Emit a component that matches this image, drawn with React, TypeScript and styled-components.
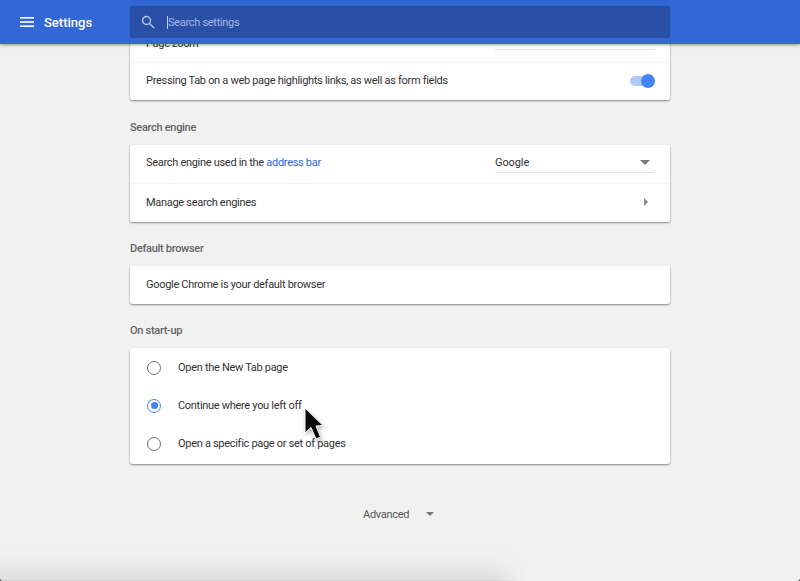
import React from 'react';
import styled, { createGlobalStyle } from 'styled-components';

const GlobalStyle = createGlobalStyle`
  html, body {
    margin: 0;
    height: 100%;
    background: #333;
    font-family: Roboto, "Liberation Sans", sans-serif;
    overflow: hidden;
  }
`;

const Page = styled.div`
  position: relative;
  width: 800px;
  height: 581px;
  overflow: hidden;
  border-radius: 0 0 3px 3px;
  background: #f1f1f1;
`;

const Header = styled.header`
  position: relative;
  z-index: 2;
  height: 44px;
  background: #3367d6;
  box-shadow: 0 1px 3px rgba(0, 0, 0, 0.4);
  display: flex;
  align-items: center;
`;

const TitleBlock = styled.div`
  width: 130px;
  display: flex;
  align-items: center;
  gap: 10px;
  padding-left: 20px;
  box-sizing: border-box;
  color: #fff;
`;

const Title = styled.span`
  font-size: 13px;
  font-weight: 500;
`;

const SearchBox = styled.div`
  width: 540px;
  height: 32px;
  border-radius: 2px;
  background: #2a50a6;
  display: flex;
  align-items: center;
  padding-left: 11px;
  box-sizing: border-box;
`;

const Caret = styled.span`
  width: 1px;
  height: 13px;
  margin-left: 12px;
  background: #c4d3f2;
`;

const Placeholder = styled.span`
  font-size: 11px;
  letter-spacing: -0.3px;
  color: #a3b8e6;
`;

const Main = styled.main`
  width: 540px;
  margin: -15px auto 0;
  display: flex;
  flex-direction: column;
`;

const Card = styled.section<{ $padded?: boolean }>`
  background: #fff;
  border-radius: 2px;
  box-shadow: 0 1px 2px rgba(0, 0, 0, 0.45);
  padding: ${(p) => (p.$padded ? '1px 0' : '0')};
`;

const Row = styled.div<{ $divided?: boolean; $h?: number; $pb?: number }>`
  height: ${(p) => p.$h ?? 38}px;
  padding: 0 16px ${(p) => p.$pb ?? 2}px;
  box-sizing: border-box;
  display: flex;
  align-items: center;
  justify-content: space-between;
  font-size: 11px;
  letter-spacing: -0.3px;
  color: #333;
  border-top: ${(p) => (p.$divided ? '1px solid #f3f3f3' : 'none')};
`;

const ClippedLabel = styled.span`
  margin-top: -2px;
`;

const SectionTitle = styled.h2<{ $top?: number }>`
  margin: ${(p) => p.$top ?? 19}px 0 9px;
  height: 16px;
  line-height: 16px;
  font-size: 11px;
  font-weight: 500;
  letter-spacing: -0.3px;
  color: #646464;
`;

const Link = styled.span`
  color: #3367d6;
`;

const ToggleTrack = styled.div`
  position: relative;
  width: 24px;
  height: 10px;
  border-radius: 5px;
  background: #b3c9f5;
`;

const ToggleKnob = styled.div`
  position: absolute;
  right: -1px;
  top: -2px;
  width: 14px;
  height: 14px;
  border-radius: 50%;
  background: #4285f4;
`;

const Select = styled.div`
  width: 159px;
  height: 21px;
  padding-top: 3px;
  box-sizing: border-box;
  border-bottom: 1px solid #e2e2e2;
  display: flex;
  align-items: flex-start;
  justify-content: space-between;
  line-height: 16px;
  letter-spacing: -0.1px;
`;

const ZoomSelect = styled.div`
  width: 159px;
  height: 11px;
  box-sizing: border-box;
  border-bottom: 1px solid #e2e2e2;
`;

const ArrowDown = styled.span<{ $w: number }>`
  width: 0;
  height: 0;
  border-left: ${(p) => p.$w}px solid transparent;
  border-right: ${(p) => p.$w}px solid transparent;
  border-top: ${(p) => p.$w}px solid #777;
`;

const SelectArrow = styled(ArrowDown)`
  margin: 5px 4px 0 0;
`;

const ArrowRight = styled.span`
  width: 0;
  height: 0;
  margin-right: 6px;
  border-top: 4px solid transparent;
  border-bottom: 4px solid transparent;
  border-left: 4px solid #888;
`;

const RadioRow = styled.div`
  height: 38px;
  padding: 0 0 1px 17px;
  box-sizing: border-box;
  display: flex;
  align-items: center;
  gap: 17px;
  font-size: 11px;
  letter-spacing: -0.3px;
  color: #333;
`;

const Radio = styled.span<{ $checked?: boolean }>`
  width: 14px;
  height: 14px;
  box-sizing: border-box;
  border-radius: 50%;
  border: 1.5px solid ${(p) => (p.$checked ? '#4285f4' : '#6e6e6e')};
  display: flex;
  align-items: center;
  justify-content: center;
  &::after {
    content: '';
    display: ${(p) => (p.$checked ? 'block' : 'none')};
    width: 7px;
    height: 7px;
    border-radius: 50%;
    background: #4285f4;
  }
`;

const Advanced = styled.div`
  margin: 41px 0 0 233px;
  display: flex;
  align-items: center;
  gap: 17px;
  height: 18px;
  font-size: 11px;
  letter-spacing: -0.3px;
  color: #555;
`;

const Cursor = styled.svg`
  position: absolute;
  z-index: 3;
  left: 304px;
  top: 407px;
  filter: drop-shadow(1px 2px 2px rgba(0, 0, 0, 0.3));
`;

const BottomShade = styled.div`
  position: absolute;
  left: 0;
  bottom: 0;
  width: 525px;
  height: 34px;
  background: linear-gradient(
    to bottom,
    rgba(0, 0, 0, 0),
    rgba(0, 0, 0, 0.02) 50%,
    rgba(0, 0, 0, 0.07) 97%,
    rgba(0, 0, 0, 0.18)
  );
  mask-image: linear-gradient(to right, #000 94%, transparent);
`;

const App = () => {
  return (
    <Page>
      <GlobalStyle />
      <Header>
        <TitleBlock>
          <svg width="14" height="12" viewBox="0 0 14 12" fill="#fff">
            <rect x="0" y="1" width="14" height="1.6" />
            <rect x="0" y="5.2" width="14" height="1.6" />
            <rect x="0" y="9.4" width="14" height="1.6" />
          </svg>
          <Title>Settings</Title>
        </TitleBlock>
        <SearchBox>
          <svg width="14" height="14" viewBox="0 0 14 14" fill="none" stroke="#b5c6ec" strokeWidth="1.4">
            <circle cx="5.5" cy="5.5" r="4" />
            <path d="M8.5 8.5 L13 13" />
          </svg>
          <Caret />
          <Placeholder>Search settings</Placeholder>
        </SearchBox>
      </Header>
      <Main>
        <Card>
          <Row $h={33}>
            <ClippedLabel>Page zoom</ClippedLabel>
            <ZoomSelect />
          </Row>
          <Row $divided>
            <span>Pressing Tab on a web page highlights links, as well as form fields</span>
            <ToggleTrack>
              <ToggleKnob />
            </ToggleTrack>
          </Row>
        </Card>
        <SectionTitle $top={20}>Search engine</SectionTitle>
        <Card>
          <Row $pb={4}>
            <span>
              Search engine used in the <Link>address bar</Link>
            </span>
            <Select>
              <span>Google</span>
              <SelectArrow $w={5} />
            </Select>
          </Row>
          <Row $divided $h={39}>
            <span>Manage search engines</span>
            <ArrowRight />
          </Row>
        </Card>
        <SectionTitle>Default browser</SectionTitle>
        <Card>
          <Row>
            <span>Google Chrome is your default browser</span>
          </Row>
        </Card>
        <SectionTitle>On start-up</SectionTitle>
        <Card $padded>
          <RadioRow>
            <Radio />
            <span>Open the New Tab page</span>
          </RadioRow>
          <RadioRow>
            <Radio $checked />
            <span>Continue where you left off</span>
          </RadioRow>
          <RadioRow>
            <Radio />
            <span>Open a specific page or set of pages</span>
          </RadioRow>
        </Card>
        <Advanced>
          <span>Advanced</span>
          <ArrowDown $w={4} />
        </Advanced>
      </Main>
      <Cursor width="22" height="34" viewBox="0 0 22 34">
        <path d="M1 1 L1 26 L7 20.5 L12 32 L16.5 30 L12 19 L19 18.5 Z" fill="#0a0a0a" stroke="#fff" strokeWidth="1" />
      </Cursor>
      <BottomShade />
    </Page>
  );
};

export default App;
